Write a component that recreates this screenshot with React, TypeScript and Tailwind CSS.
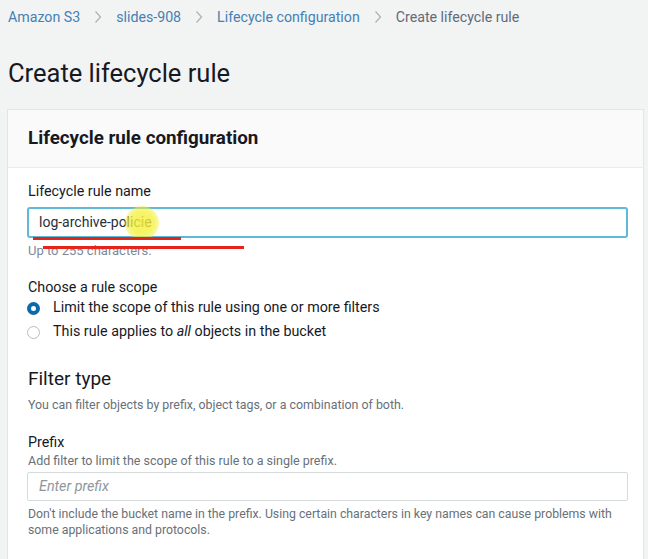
function Chevron() {
  return (
    <svg width="8" height="14" viewBox="0 0 8 14" className="mx-[14px] shrink-0">
      <path d="M1.5 1.5 L6.5 7 L1.5 12.5" fill="none" stroke="#aab7b8" strokeWidth="1.3" />
    </svg>
  );
}

function Radio({ checked }: { checked: boolean }) {
  return checked ? (
    <span className="w-[13px] h-[13px] rounded-full border-[4px] border-[#0a6aaa] bg-white shrink-0 box-border" />
  ) : (
    <span className="w-[13px] h-[13px] rounded-full border-[1.5px] border-[#b6bec2] bg-white shrink-0 box-border" />
  );
}

export default function App() {
  return (
    <div className="w-[648px] h-[559px] overflow-hidden bg-[#f2f3f3] [font-family:Roboto,sans-serif] text-[#16191f]">
      <nav className="flex items-center h-[20px] mt-[7px] pl-[8px] text-[14.2px] leading-[20px]">
        <span className="text-[#4580b6]">Amazon S3</span>
        <Chevron />
        <span className="text-[#4580b6]">slides-908</span>
        <Chevron />
        <span className="text-[#4580b6]">Lifecycle configuration</span>
        <Chevron />
        <span className="text-[#5f6b7a]">Create lifecycle rule</span>
      </nav>

      <h1 className="mt-[30px] pl-[8px] h-[32px] text-[25.5px] leading-[32px] font-normal text-[#16191f]">
        Create lifecycle rule
      </h1>

      <section className="mt-[20px] ml-[7px] w-[637px] border border-[#e3e6e6] bg-white">
        <div className="h-[58px] flex items-center pl-[20px] bg-[#fafafa] border-b border-[#eaeded]">
          <h2 className="text-[18.8px] font-bold text-[#16191f]">Lifecycle rule configuration</h2>
        </div>

        <div className="relative pl-[19px] pt-[13px] pb-[40px]">
          <div className="h-[20px] leading-[20px] text-[14.3px] pl-[1px]">Lifecycle rule name</div>
          <div className="mt-[6px] w-[601px] h-[31px] border-2 border-[#5fbad5] rounded-[3px] flex items-center pl-[10px] text-[14px] text-[#2a2f36]">
            log-archive-policie
          </div>
          <div className="mt-[5px] h-[16px] leading-[16px] text-[13px] text-[#7d8998] pl-[1px]">Up to 255 characters.</div>

          <div className="mt-[18px] h-[20px] leading-[20px] text-[14.3px] pl-[1px]">Choose a rule scope</div>
          <div className="flex items-center h-[22px] text-[14.3px]">
            <Radio checked />
            <span className="ml-[13px]">Limit the scope of this rule using one or more filters</span>
          </div>
          <div className="mt-[2px] flex items-center h-[22px] text-[14.3px]">
            <Radio checked={false} />
            <span className="ml-[13px]">
              This rule applies to <i>all</i> objects in the bucket
            </span>
          </div>

          <h3 className="mt-[23px] h-[26px] leading-[26px] text-[19px] font-normal pl-[1px]">Filter type</h3>
          <div className="mt-[5px] h-[16px] leading-[16px] text-[12.4px] text-[#687078] pl-[1px]">
            You can filter objects by prefix, object tags, or a combination of both.
          </div>

          <div className="mt-[19px] h-[20px] leading-[20px] text-[14.3px] pl-[1px]">Prefix</div>
          <div className="mt-[1px] h-[16px] leading-[16px] text-[12.5px] text-[#687078] pl-[1px]">
            Add filter to limit the scope of this rule to a single prefix.
          </div>
          <div className="mt-[3px] w-[601px] h-[29px] border border-[#d5dbdb] rounded-[2px] flex items-center pl-[11px] text-[14.3px] italic text-[#8d979b]">
            Enter prefix
          </div>
          <div className="mt-[5px] leading-[16px] text-[12.3px] text-[#687078] pl-[1px] whitespace-nowrap">
            Don't include the bucket name in the prefix. Using certain characters in key names can cause problems with
            <br />
            some applications and protocols.
          </div>

          <div className="absolute left-[117px] top-[38px] w-[34px] h-[34px] rounded-full pointer-events-none bg-[radial-gradient(circle,rgba(245,240,60,0.85)_0%,rgba(245,240,60,0.75)_50%,rgba(245,240,60,0)_100%)]" />
          <div className="absolute left-[25px] top-[69px] w-[148px] h-[3px] bg-[#e3261c]" />
          <div className="absolute left-[35px] top-[78px] w-[201px] h-[3px] bg-[#e3261c]" />
        </div>
      </section>
    </div>
  );
}
